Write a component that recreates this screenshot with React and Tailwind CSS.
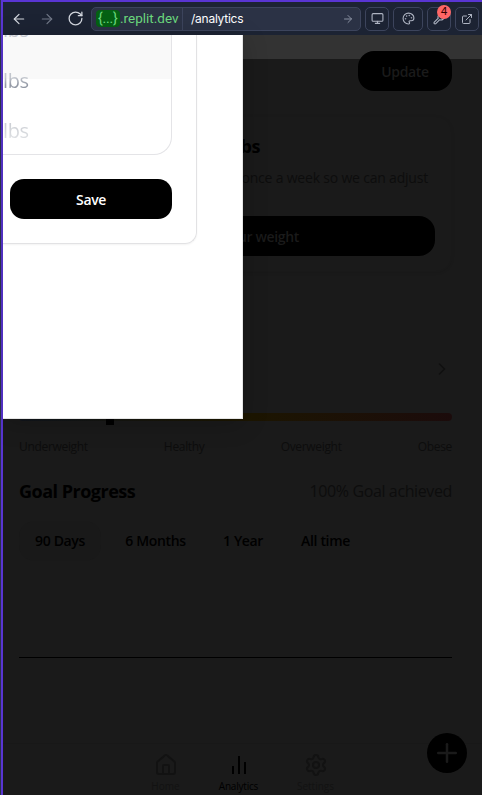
import { ArrowLeft, ArrowRight, RotateCw, Monitor, Palette, Wrench, ExternalLink, ChevronRight, House, Settings, Plus } from "lucide-react";

const toolButton = "flex h-6 items-center justify-center rounded-[5px] border border-[#3c445c] text-[#aeb4c2]";

function Toolbar() {
  return (
    <header className="flex h-[33px] shrink-0 items-center bg-[#1c2333] font-['Inter',sans-serif]">
      <div className="flex w-[88px] items-center gap-3 pl-2 text-[#d3d7df]">
        <ArrowLeft size={16} strokeWidth={1.8} />
        <ArrowRight size={16} strokeWidth={1.8} className="text-[#717887]" />
        <RotateCw size={17} strokeWidth={1.8} />
      </div>
      <div className="flex h-6 w-[270px] items-center rounded-[5px] border border-[#3c445c] bg-[#2b3245] text-[12px] text-white">
        <span className="ml-1 w-6 rounded bg-[#046113] pl-[2px] font-['Roboto',sans-serif] text-[14px] leading-[17px] tracking-[-0.2px] text-[#6cd97e]">{"{...}"}</span>
        <span className="w-[62px] font-['Roboto',sans-serif] text-[13.5px] whitespace-nowrap text-[#6cd97e]">.replit.dev</span>
        <span className="h-full border-l border-[#3c445c] pl-2 leading-[22px] tracking-[-0.25px]">/analytics</span>
        <ArrowRight size={12} strokeWidth={2} className="mr-[6px] ml-auto text-[#8b92a3]" />
      </div>
      <div className={`${toolButton} ml-1 w-6`}><Monitor size={13} strokeWidth={2} /></div>
      <div className={`${toolButton} ml-1 w-[30px]`}><Palette size={13} strokeWidth={2} /></div>
      <div className={`${toolButton} relative ml-1 w-6`}>
        <Wrench size={12} strokeWidth={2.2} />
        <span className="absolute -top-[3px] left-[9px] flex size-[14px] items-center justify-center rounded-full bg-[#ff6666] text-[11px] text-[#300]">4</span>
      </div>
      <div className={`${toolButton} ml-1 w-6`}><ExternalLink size={12} strokeWidth={2} /></div>
    </header>
  );
}

function WeightDialog() {
  return (
    <div className="absolute top-0 left-0 h-96 w-60 overflow-hidden border-r border-b border-[#e5e5e5] bg-white shadow-[0_4px_24px_rgba(0,0,0,0.2)]">
      <div className="h-[209px] w-[194px] rounded-br-xl border-r border-b border-[#e2e2e4] shadow-[0_1px_2px_rgba(0,0,0,0.05)]">
        <div className="h-[120px] w-[169px] rounded-br-[18px] border-r border-b border-[#e4e4e7] bg-[linear-gradient(#f9f9f9_44px,#fff_44px)] text-[20px] leading-[50px] tracking-[-0.4px]">
          <div className="flex h-5 items-end text-[#c5c8cf]"><span>lbs</span></div>
          <div className="h-[50px] bg-linear-to-b from-[#c2c6cd] from-45% to-[#9298a4] to-60% bg-clip-text pt-px text-transparent">lbs</div>
          <div className="h-[50px] bg-linear-to-b from-[#cdd0d5] from-40% to-[#dfe1e4] to-70% bg-clip-text pt-px text-transparent">lbs</div>
        </div>
        <button className="mt-6 ml-[7px] h-10 w-[162px] rounded-[14px] bg-black text-[14px] font-semibold tracking-[-0.4px] text-white">Save</button>
      </div>
    </div>
  );
}

function Analytics() {
  return (
    <section className="flex h-full flex-col pt-4 pr-[30px] pl-4 text-black">
      <button className="h-10 w-[94px] shrink-0 self-end rounded-2xl bg-black text-[14px] font-semibold tracking-[-0.35px] text-[#1a1a1a]">Update</button>
      <article className="mt-[25px] h-[156px] shrink-0 rounded-2xl border border-[#191919] p-4 text-right shadow-[0_1px_3px_rgba(0,0,0,0.1)]">
        <h2 className="-mt-px pr-[175px] text-[18px] leading-7 font-bold tracking-[-0.4px]">lbs</h2>
        <p className="mt-2 h-10 pr-[7px] text-[14px] leading-5 tracking-[-0.2px] text-[#0d0d0d]">once a week so we can adjust</p>
        <button className="mt-2 block h-10 w-full rounded-2xl bg-black pr-[136px] text-right text-[14px] font-semibold tracking-[-0.35px] text-[#1a1a1a]">your weight</button>
      </article>
      <ChevronRight size={20} strokeWidth={1.8} className="mt-[87px] shrink-0 self-end text-[#101010]" />
      <div className="mt-[34px] h-2 shrink-0 rounded-full bg-linear-to-r from-[#10151c] via-[#1c1600] to-[#1b0b0b]">
        <div className="-mt-1 ml-[87px] h-4 w-2 bg-black" />
      </div>
      <div className="mt-[18px] flex h-4 shrink-0 justify-between text-[12px] leading-4 tracking-[-0.32px] text-[#0d0d0d]">
        <span>Underweight</span><span>Healthy</span><span>Overweight</span><span>Obese</span>
      </div>
      <div className="mt-[22px] flex h-7 shrink-0 items-center justify-between">
        <h2 className="text-[18px] font-bold tracking-[-0.5px]">Goal Progress</h2>
        <span className="text-[16px] tracking-[-0.38px] text-[#0d0d0d]">100% Goal achieved</span>
      </div>
      <nav className="mt-4 flex h-10 shrink-0 gap-2 text-[14px] font-semibold tracking-[-0.35px] whitespace-nowrap">
        <button className="w-[82px] rounded-2xl bg-[#191919] pb-px">90 Days</button>
        <button className="w-[93px] pb-px">6 Months</button>
        <button className="w-[66px] pb-px">1 Year</button>
        <button className="w-[83px] pb-px">All time</button>
      </nav>
      <div className="mt-24 h-px shrink-0 bg-black" />
    </section>
  );
}

function BottomNav() {
  return (
    <nav className="absolute inset-x-0 bottom-0 flex h-[52px] justify-center gap-[25px] border-t border-[#181818] pt-[9px] pr-[4px] text-[10px] leading-[13px]">
      <div className="flex w-[50px] flex-col items-center gap-[3px] text-[#121212]"><House size={24} strokeWidth={2} />Home</div>
      <div className="-ml-0.5 flex w-[50px] flex-col items-center gap-[3px] font-medium tracking-[-0.2px] text-black">
        <svg width="24" height="24" viewBox="0 0 24 24" fill="none" stroke="currentColor" strokeWidth="2"><path d="M6 21v-8M12 21V3M18 21V9" /></svg>
        Analytics
      </div>
      <div className="ml-0.5 flex w-[50px] flex-col items-center gap-[3px] text-[#121212]"><Settings size={24} strokeWidth={2} />Settings</div>
    </nav>
  );
}

export default function App() {
  return (
    <div className="h-[795px] w-[482px] overflow-hidden border-l border-[#29324a] bg-[#1a1a1a]">
      <div className="flex h-full flex-col border-t-2 border-l-2 border-[#5935d3] font-['Open_Sans',sans-serif]">
        <Toolbar />
        <main className="relative min-h-0 flex-1 bg-[linear-gradient(#333_24px,#1a1a1a_24px)]">
          <Analytics />
          <BottomNav />
          <button className="absolute right-[15px] bottom-[22px] flex size-10 items-center justify-center rounded-full bg-black text-[#1a1a1a]"><Plus size={30} strokeWidth={2} /></button>
          <WeightDialog />
        </main>
      </div>
    </div>
  );
}
